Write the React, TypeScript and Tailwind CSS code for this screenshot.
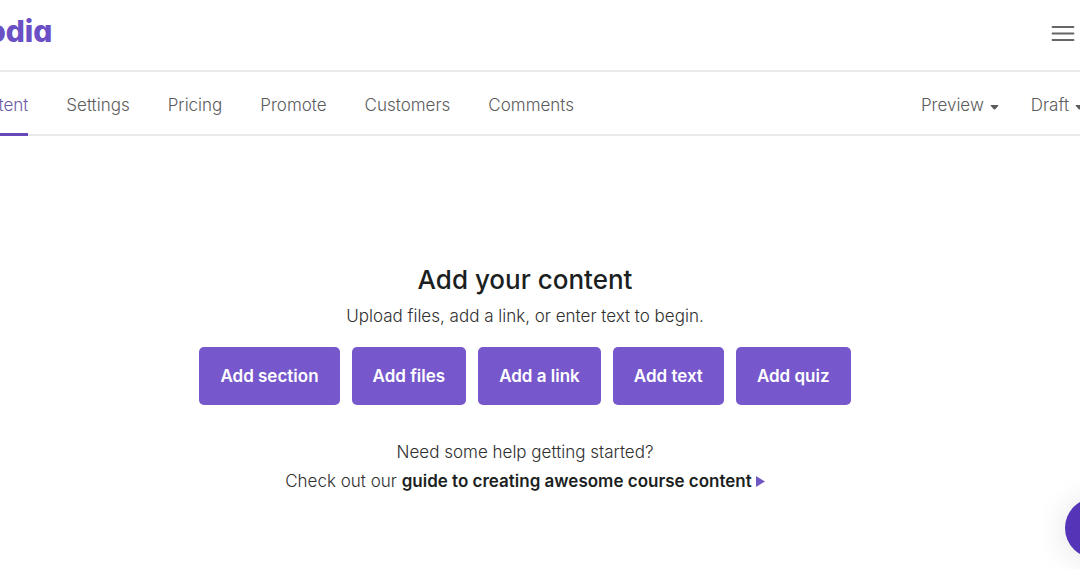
import React from 'react';

const tabs = ['Content', 'Settings', 'Pricing', 'Promote', 'Customers', 'Comments'];
const menus = ['Preview', 'Draft'];
const actions = ['Add section', 'Add files', 'Add a link', 'Add text', 'Add quiz'];

function Caret() {
  return (
    <svg viewBox="0 0 9 5" className="mt-0.5 h-[5px] w-[9px]" fill="currentColor" aria-hidden="true">
      <path d="M1.2 0h6.6q1 .2.4 1L5.2 4.2q-.7.7-1.4 0L.8 1Q.2.2 1.2 0z" />
    </svg>
  );
}

function Header() {
  return (
    <header className="flex h-[72px] items-center justify-between border-b-2 border-[#e9e9ea] pr-[39px] pl-8">
      <a
        href="#home"
        className="-mt-2 text-[30px] leading-8 font-extrabold text-[#6a50c4] [font-feature-settings:'cv11','ss03']"
      >
        podia
      </a>
      <button type="button" aria-label="Menu" className="-mt-1 text-[#666]">
        <svg viewBox="0 0 24 15" className="h-[15px] w-6" stroke="currentColor" strokeWidth="1.8" strokeLinecap="round">
          <path d="M1.5 1h21M1.5 7.5h21M1.5 14h21" />
        </svg>
      </button>
    </header>
  );
}

function CourseNav() {
  return (
    <nav className="flex h-16 justify-between border-b-2 border-[#e9e9ea] pr-[30px] pl-[30px] font-light text-[#5c5c5c]">
      <div className="flex gap-[38px]">
        {tabs.map((tab, i) => (
          <a
            key={tab}
            href={`#${tab.toLowerCase()}`}
            className={
              i === 0
                ? '-mb-[2px] flex items-center border-b-3 border-[#6549bb] pt-[7px] text-[#6a5aa8]'
                : 'flex items-center pt-[6px]'
            }
          >
            {tab}
          </a>
        ))}
      </div>
      <div className="flex gap-8">
        {menus.map((menu) => (
          <button key={menu} type="button" className="flex items-center gap-[6px] pt-[6px]">
            {menu}
            <Caret />
          </button>
        ))}
      </div>
    </nav>
  );
}

function EmptyContent() {
  return (
    <main className="flex flex-col items-center pt-32 text-center font-light text-[#303030]">
      <h1 className="text-[26px] leading-8 font-medium text-[#1c1f22]">Add your content</h1>
      <p className="mt-1.5 leading-7">Upload files, add a link, or enter text to begin.</p>
      <div className="mt-[17px] flex gap-3">
        {actions.map((action) => (
          <button
            key={action}
            type="button"
            className="h-[58px] rounded-[5px] bg-[#7658cc] px-[21px] pt-0.5 font-semibold text-white"
          >
            {action}
          </button>
        ))}
      </div>
      <p className="mt-[33px] leading-[29px]">
        Need some help getting started?
        <br />
        Check out our{' '}
        <a href="#guide" className="font-semibold text-[#1c1f22]">
          guide to creating awesome course content
          <svg viewBox="0 0 9 11" className="ml-1 inline h-[11px] w-[9px] align-baseline" fill="#7058c4" aria-hidden="true">
            <path d="M0 0l9 5.5L0 11z" />
          </svg>
        </a>
      </p>
    </main>
  );
}

export default function App() {
  return (
    <div className="relative min-h-screen overflow-hidden bg-white font-['Inter',sans-serif] text-[17px]">
      <div className="-mr-[34px] -ml-16">
        <Header />
        <CourseNav />
        <EmptyContent />
      </div>
      <button
        type="button"
        aria-label="Open chat"
        className="absolute -right-[45px] bottom-[11px] size-[60px] rounded-full bg-[#5534b8] shadow-[0_2px_32px_rgba(0,0,0,0.12)]"
      />
    </div>
  );
}
